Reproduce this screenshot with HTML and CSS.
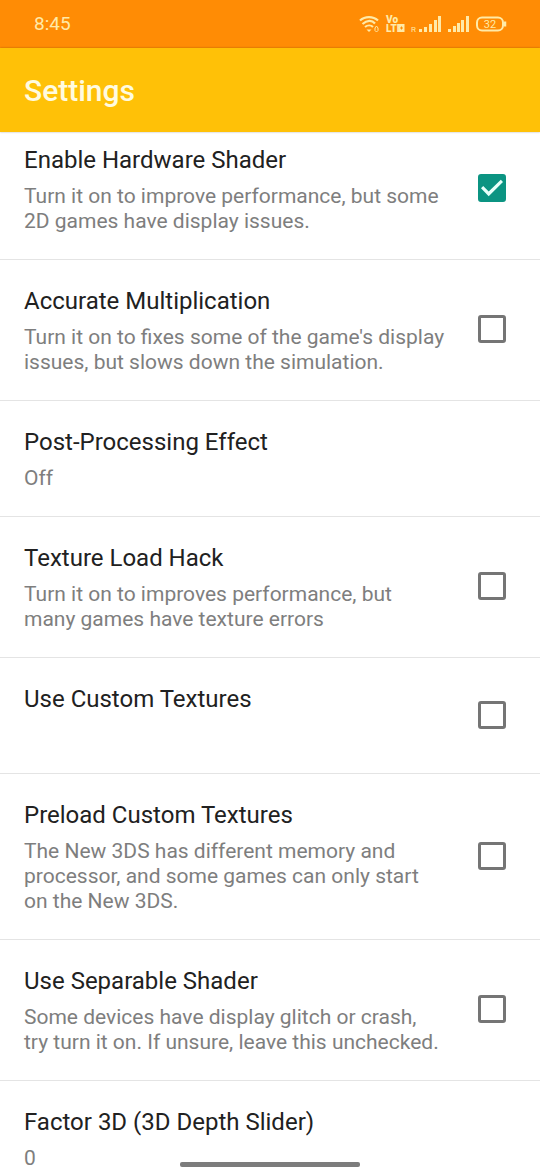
FILE: index.html
```html
<!DOCTYPE html>
<html lang="en">
<head>
<meta charset="utf-8">
<meta name="viewport" content="width=device-width, initial-scale=1">
<title>Settings</title>
<link rel="stylesheet" href="styles.css">
</head>
<body>
<div class="screen">
  <div class="status">
    <span class="clock">8:45</span>
    <svg class="status-icons" width="148" height="20" viewBox="0 0 148 20" role="img" aria-label="Wi-Fi, VoLTE, signal, battery 32">
      <g fill="none" stroke="currentColor" stroke-width="2.200">
        <path d="M1 6.500C6 2 14 2 19 6.500M3.500 10C8 6 13 6 16 9.500M6 13C8.500 11 12 11 14 13"/>
        <path d="M7.500 15.500h5l-2.500 2.500z" fill="currentColor" stroke="none"/>
        <path d="M17.500 12l-1.500 2v2.500l1.500 1.500 1.500-1.500v-2.500z" stroke-width="1"/>
        <rect x="118" y="3.500" width="26" height="13" rx="5" stroke-width="2"/>
        <path d="M146 7.500v5" stroke-width="2.500"/>
      </g>
      <g fill="currentColor">
        <text class="volte" x="27" y="9">Vo</text>
        <text class="volte" x="27" y="18">LTE</text>
        <path d="M39.500 10h6v8h-6z"/>
        <text class="roaming" x="52" y="18">R</text>
        <path d="M60 15h3v3h-3zM65 13h3v5h-3zM70 10h3v8h-3zM75 6h3v12h-3zM79 2h3v16h-3z"/>
        <path d="M89 15h3v3h-3zM94 12h3v6h-3zM98 9h3v9h-3zM102 6h3v12h-3zM107 2h3v16h-3z"/>
        <text class="charge" x="131" y="14" text-anchor="middle">32</text>
      </g>
      <path class="volte-mark" d="M42.500 12.500v3M41 14h3"/>
    </svg>
  </div>
  <header class="bar"><h1 class="bar-title">Settings</h1></header>
  <main class="list">
    <label class="row row-scrolled">
      <span class="text"><span class="name">Enable Hardware Shader</span><span class="note">Turn it on to improve performance, but some<br>2D games have display issues.</span></span>
      <input class="check" type="checkbox" checked>
    </label>
    <label class="row">
      <span class="text"><span class="name">Accurate Multiplication</span><span class="note">Turn it on to fixes some of the game's display<br>issues, but slows down the simulation.</span></span>
      <input class="check" type="checkbox">
    </label>
    <button class="row" type="button">
      <span class="text"><span class="name">Post-Processing Effect</span><span class="note">Off</span></span>
    </button>
    <label class="row">
      <span class="text"><span class="name">Texture Load Hack</span><span class="note">Turn it on to improves performance, but<br>many games have texture errors</span></span>
      <input class="check" type="checkbox">
    </label>
    <label class="row">
      <span class="text"><span class="name">Use Custom Textures</span><span class="note"></span></span>
      <input class="check" type="checkbox">
    </label>
    <label class="row">
      <span class="text"><span class="name">Preload Custom Textures</span><span class="note">The New 3DS has different memory and<br>processor, and some games can only start<br>on the New 3DS.</span></span>
      <input class="check" type="checkbox">
    </label>
    <label class="row">
      <span class="text"><span class="name">Use Separable Shader</span><span class="note">Some devices have display glitch or crash,<br>try turn it on. If unsure, leave this unchecked.</span></span>
      <input class="check" type="checkbox">
    </label>
    <button class="row" type="button">
      <span class="text"><span class="name">Factor 3D (3D Depth Slider)</span><span class="note">0</span></span>
    </button>
  </main>
  <div class="home"></div>
</div>
</body>
</html>
```
FILE: styles.css
```css
* { box-sizing: border-box; }
body { margin: 0; background: #fff; font-family: Roboto, sans-serif; }
.screen { height: 100vh; display: flex; flex-direction: column; overflow: hidden; }
.status {
  flex: none; height: 48px; padding: 0 33px 0 34px;
  display: flex; align-items: center; justify-content: space-between;
  background: #ff8c05; color: #ffeaa8;
}
.clock { font-size: 19px; line-height: 24px; }
.status-icons { display: block; }
.volte { font-size: 10px; font-weight: 900; }
.volte-mark { stroke: #ff8c05; stroke-width: 1; }
.roaming { font-size: 8px; }
.charge { font-size: 11px; }
.bar {
  flex: none; height: 84px; padding: 2px 24px 0; display: flex; align-items: center;
  background: #ffc107; color: #fffbe0; box-shadow: 0 0 2px rgba(0, 0, 0, .3); z-index: 1;
}
.bar-title { margin: 0; font-size: 30px; line-height: 36px; font-weight: 500; }
.list { flex: 1; min-height: 0; overflow: hidden; }
.row {
  width: 100%; padding: 26px 34px 25px 24px;
  display: flex; align-items: center; justify-content: space-between; gap: 16px;
  border: 0; border-bottom: 1px solid #e4e4e4;
  background: #fff; font-family: inherit; text-align: left;
}
.row-scrolled { margin-top: -13px; }
.text { display: flex; flex-direction: column; gap: 9px; white-space: nowrap; }
.name { font-size: 24px; line-height: 30px; color: #212121; }
.note { font-size: 21px; line-height: 25px; min-height: 25px; color: #7e7e7e; }
.check {
  appearance: none; flex: none; width: 28px; height: 28px; margin: 0 0 3px;
  border: 3px solid #757575; border-radius: 3px; display: grid; place-items: center;
}
.check:checked { border-color: #0b9482; background: #0b9482; }
.check:checked::before {
  content: ""; width: 22px; height: 18px; background: #e8fffa;
  clip-path: polygon(0 52%, 10% 39%, 35% 69%, 90% 4%, 100% 17%, 35% 96%);
}
.home {
  position: fixed; z-index: 2; bottom: 3px; left: 50%; transform: translateX(-50%);
  width: 180px; height: 5px; border-radius: 2px; background: #7c7c7c;
}
```
